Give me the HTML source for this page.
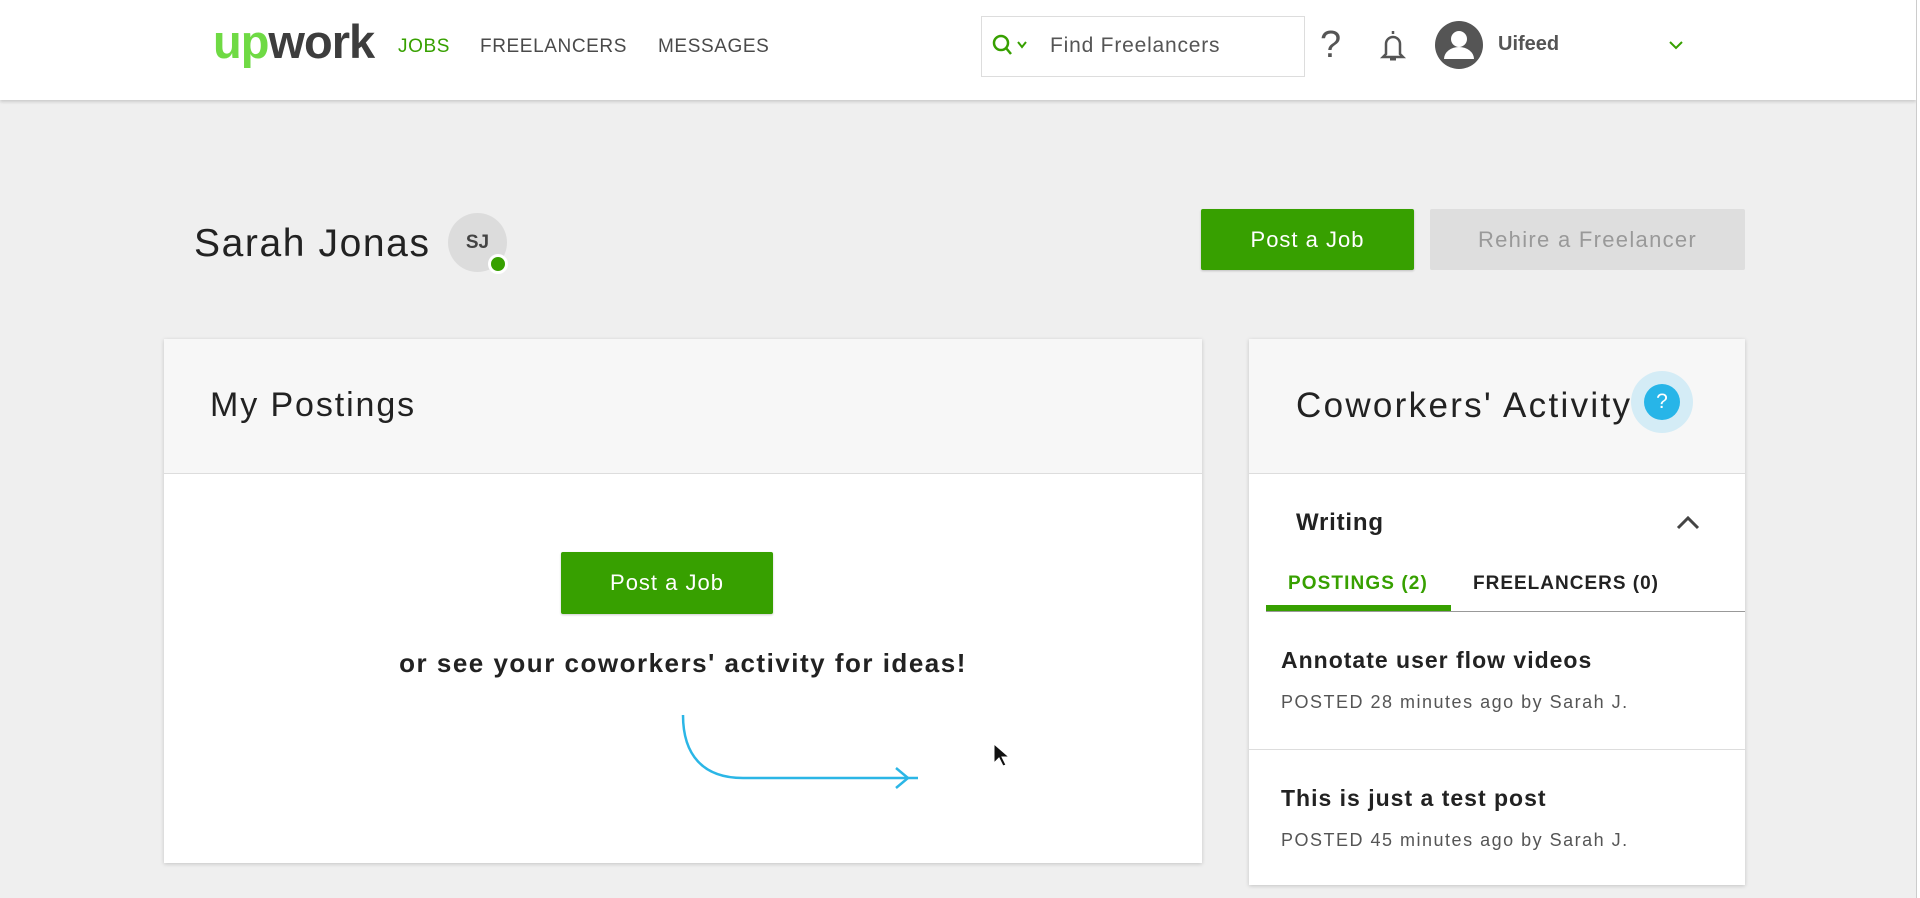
<!DOCTYPE html>
<html><head><meta charset="utf-8"><style>
*{margin:0;padding:0;box-sizing:border-box}
body{width:1920px;height:898px;background:#efefef;font-family:"Liberation Sans",sans-serif;position:relative;overflow:hidden;color:#222}
.a{position:absolute;white-space:nowrap}
.hdr{position:absolute;left:0;top:0;width:1916px;height:100px;background:#fff;box-shadow:0 2px 3px rgba(0,0,0,.15)}
.nav{font-size:19px;color:#4a4a4a;top:36px;letter-spacing:.6px}
.btn{position:absolute;display:flex;align-items:center;justify-content:center;font-size:22px;color:#fff;background:#37a000;border-radius:2px;box-shadow:0 1px 2px rgba(0,0,0,.2);letter-spacing:1px}
.card{position:absolute;background:#fff;box-shadow:0 1px 4px rgba(0,0,0,.18)}
.ch{position:absolute;left:0;top:0;right:0;height:135px;background:#f7f7f7;border-bottom:1px solid #ddd}
</style></head><body>
<div class="hdr"></div>
<div style="position:absolute;right:0;top:0;width:4px;height:898px;background:#fff;border-left:1px solid #ccc"></div>
<div class="a" style="left:213px;top:14px;font-size:47px;font-weight:bold;letter-spacing:-1px"><span style="color:#6fda44">up</span><span style="color:#3d3d3d">work</span></div>
<div class="a nav" style="left:398px;color:#37a000">JOBS</div>
<div class="a nav" style="left:480px">FREELANCERS</div>
<div class="a nav" style="left:658px">MESSAGES</div>
<div class="a" style="left:981px;top:16px;width:324px;height:61px;border:1px solid #ddd;background:#fff"></div>
<svg class="a" style="left:992px;top:34px" width="40" height="24" viewBox="0 0 40 24"><circle cx="9" cy="9" r="7" fill="none" stroke="#37a000" stroke-width="2.5"/><line x1="14" y1="14" x2="19" y2="20" stroke="#37a000" stroke-width="2.5"/><polyline points="26,8 30,13 34,8" fill="none" stroke="#37a000" stroke-width="2"/></svg>
<div class="a" style="left:1050px;top:34px;font-size:21px;color:#555;letter-spacing:.8px">Find Freelancers</div>
<div class="a" style="left:1320px;top:24px;font-size:38px;color:#555">?</div>
<svg class="a" style="left:1378px;top:28px" width="30" height="36" viewBox="0 0 30 36"><path d="M15 3v3M8 26V16a7 7 0 0 1 14 0v10l3 3H5z" fill="none" stroke="#555" stroke-width="2.5"/><path d="M12 31h6" stroke="#555" stroke-width="3"/></svg>
<svg class="a" style="left:1435px;top:21px" width="48" height="48" viewBox="0 0 48 48"><circle cx="24" cy="24" r="24" fill="#555"/><circle cx="24" cy="18" r="8" fill="#fff"/><path d="M9 38a15 12 0 0 1 30 0" fill="#fff"/></svg>
<div class="a" style="left:1498px;top:33px;font-size:20px;color:#555;font-weight:bold">Uifeed</div>
<svg class="a" style="left:1668px;top:40px" width="16" height="10"><polyline points="2,2 8,8 14,2" fill="none" stroke="#37a000" stroke-width="2"/></svg>

<div class="a" style="left:194px;top:222px;font-size:39px;color:#222;letter-spacing:1.6px">Sarah Jonas</div>
<div class="a" style="left:448px;top:213px;width:59px;height:59px;border-radius:50%;background:#dcdcdc;color:#444;font-size:19px;font-weight:bold;text-align:center;line-height:59px">SJ</div>
<div class="a" style="left:488px;top:254px;width:20px;height:20px;border-radius:50%;background:#37a000;border:3px solid #fff"></div>
<div class="btn" style="left:1201px;top:209px;width:213px;height:61px">Post a Job</div>
<div class="btn" style="left:1430px;top:209px;width:315px;height:61px;background:#dedede;color:#999;box-shadow:none;letter-spacing:1.3px">Rehire a Freelancer</div>

<div class="card" style="left:164px;top:339px;width:1038px;height:524px"><div class="ch"></div></div>
<div class="a" style="left:210px;top:386px;font-size:34px;color:#222;letter-spacing:1.9px">My Postings</div>
<div class="btn" style="left:561px;top:552px;width:212px;height:62px">Post a Job</div>
<div class="a" style="left:380px;top:648px;width:606px;text-align:center;font-size:26px;font-weight:bold;color:#222;letter-spacing:1.5px">or see your coworkers' activity for ideas!</div>
<svg class="a" style="left:670px;top:705px" width="260" height="85"><path d="M13 10c0 40 20 63 60 63h175" fill="none" stroke="#2bb6e6" stroke-width="2.5"/><polyline points="226,63 238,73 226,83" fill="none" stroke="#2bb6e6" stroke-width="2.5"/></svg>
<svg class="a" style="left:992px;top:742px" width="18" height="26"><path d="M2 2v19l5-5 4 8 3-1-4-8h7z" fill="#111" stroke="#fff" stroke-width="1"/></svg>

<div class="card" style="left:1249px;top:339px;width:496px;height:546px"><div class="ch"></div></div>
<div class="a" style="left:1296px;top:386px;font-size:35px;color:#222;letter-spacing:2.3px">Coworkers' Activity</div>
<div class="a" style="left:1631px;top:371px;width:62px;height:62px;border-radius:50%;background:#d4ecf6"></div>
<div class="a" style="left:1644px;top:384px;width:36px;height:36px;border-radius:50%;background:#27b5e8;color:#fff;font-size:21px;text-align:center;line-height:36px">?</div>
<div class="a" style="left:1296px;top:509px;font-size:24px;color:#222;font-weight:bold;letter-spacing:.8px">Writing</div>
<svg class="a" style="left:1676px;top:515px" width="24" height="16"><polyline points="2,13 12,3 22,13" fill="none" stroke="#444" stroke-width="3"/></svg>
<div class="a" style="left:1288px;top:573px;font-size:19px;color:#37a000;letter-spacing:1.1px;font-weight:bold">POSTINGS (2)</div>
<div class="a" style="left:1473px;top:573px;font-size:19px;color:#222;letter-spacing:1px;font-weight:bold">FREELANCERS (0)</div>
<div class="a" style="left:1266px;top:611px;width:479px;height:1px;background:#999"></div>
<div class="a" style="left:1266px;top:605px;width:185px;height:6px;background:#37a000"></div>
<div class="a" style="left:1281px;top:647px;font-size:23px;color:#222;font-weight:bold;letter-spacing:1px">Annotate user flow videos</div>
<div class="a" style="left:1281px;top:692px;font-size:18px;color:#555;letter-spacing:1.5px">POSTED 28 minutes ago by Sarah J.</div>
<div class="a" style="left:1249px;top:749px;width:496px;height:1px;background:#ddd"></div>
<div class="a" style="left:1281px;top:785px;font-size:23px;color:#222;font-weight:bold;letter-spacing:1px">This is just a test post</div>
<div class="a" style="left:1281px;top:830px;font-size:18px;color:#555;letter-spacing:1.5px">POSTED 45 minutes ago by Sarah J.</div>
</body></html>
